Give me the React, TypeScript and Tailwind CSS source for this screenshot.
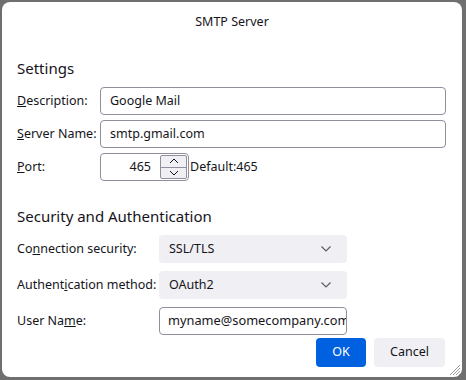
import React from "react";

function Chevron() {
  return (
    <svg width="12" height="8" viewBox="0 0 12 8" className="text-[#5b5b66]">
      <path d="M1.5 1.5 L6 6 L10.5 1.5" fill="none" stroke="currentColor" strokeWidth="1.2" />
    </svg>
  );
}

function Select({ value }: { value: string }) {
  return (
    <div className="w-[188px] h-[28px] rounded-[4px] bg-[#f0f0f4] flex items-center justify-between pl-[10px] pr-[15px]">
      <span>{value}</span>
      <Chevron />
    </div>
  );
}

export default function App() {
  return (
    <div
      className="w-[466px] h-[380px] bg-[#6f6f6f] pl-[2px] pt-[2px] pr-[4px] pb-[3px] text-[12.5px] text-[#15141a]"
      style={{ fontFamily: '"Noto Sans", sans-serif' }}
    >
      <div className="relative w-full h-full bg-white rounded-[8px] flex flex-col">
        <div className="h-[38px] flex items-center justify-center pt-[2px]">SMTP Server</div>

        <div className="pl-[15px] pr-[16px]">
          <div className="mt-[18px] text-[15px] leading-[20px]">Settings</div>

          <div className="mt-[9px] grid grid-cols-[83px_1fr] gap-y-[5px] items-center">
            <span>
              <u>D</u>escription:
            </span>
            <div className="h-[28px] border border-[#8f8f9d] rounded-[4px] flex items-center px-[9px]">Google Mail</div>
            <span>
              <u>S</u>erver Name:
            </span>
            <div className="h-[28px] border border-[#8f8f9d] rounded-[4px] flex items-center px-[9px]">smtp.gmail.com</div>
            <span>
              <u>P</u>ort:
            </span>
            <div className="flex items-center">
              <div className="w-[89px] h-[28px] border border-[#8f8f9d] rounded-[4px] flex items-center justify-between pl-[8px] pr-[1px]">
                <span className="flex-1 text-right pr-[9px]">465</span>
                <div className="w-[27px] h-[24px] flex flex-col border border-[#8f8f9d] rounded-[2px] overflow-hidden bg-[#f0f0f4]">
                  <div className="flex-1 flex items-center justify-center border-b border-[#8f8f9d]">
                    <svg width="10" height="6" viewBox="0 0 10 6">
                      <path d="M1 5 L5 1 L9 5" fill="none" stroke="#15141a" strokeWidth="1" />
                    </svg>
                  </div>
                  <div className="flex-1 flex items-center justify-center">
                    <svg width="10" height="6" viewBox="0 0 10 6">
                      <path d="M1 1 L5 5 L9 1" fill="none" stroke="#15141a" strokeWidth="1" />
                    </svg>
                  </div>
                </div>
              </div>
              <span className="ml-[1px]">Default:465</span>
            </div>
          </div>

          <div className="mt-[25px] text-[15px] leading-[20px]">Security and Authentication</div>

          <div className="mt-[9px] grid grid-cols-[142px_auto_1fr] gap-y-[8px] items-center">
            <span className="whitespace-nowrap">
              Co<u>n</u>nection security:
            </span>
            <Select value="SSL/TLS" />
            <span />
            <span className="whitespace-nowrap">
              Authent<u>i</u>cation method:
            </span>
            <Select value="OAuth2" />
            <span />
            <span className="whitespace-nowrap">
              User Na<u>m</u>e:
            </span>
            <div className="w-[188px] h-[28px] border border-[#8f8f9d] rounded-[4px] flex items-center pl-[8px] overflow-hidden whitespace-nowrap text-[12.8px]">
              myname@somecompany.com
            </div>
            <span />
          </div>

          <div className="mt-[3px] flex justify-end gap-[8px] pr-[1px]">
            <button className="w-[50px] h-[29px] rounded-[4px] bg-[#0061e0] text-white">OK</button>
            <button className="w-[71px] h-[29px] rounded-[4px] bg-[#f0f0f4]">Cancel</button>
          </div>
        </div>

        <svg width="12" height="12" viewBox="0 0 12 12" className="absolute right-[1px] bottom-[1px]">
          <path d="M11 1 L1 11 M11 4 L4 11 M11 7 L7 11 M11 10 L10 11" stroke="#9a9a9a" strokeWidth="1" />
        </svg>
      </div>
    </div>
  );
}
